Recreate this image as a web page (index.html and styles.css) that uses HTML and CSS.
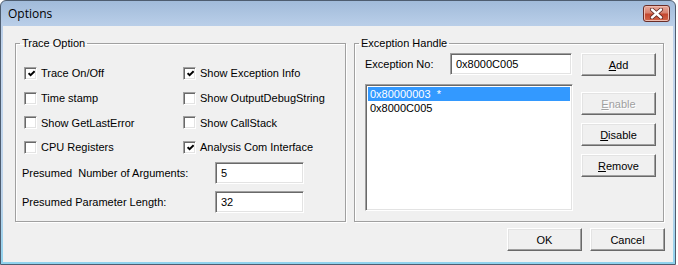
FILE: index.html
```html
<!DOCTYPE html>
<html lang="en">
  <head>
    <meta charset="utf-8">
    <title>Options</title>
    <link rel="stylesheet" href="styles.css">
  </head>
  <body>
    <div class="window">
      <div class="titlebar">
        <span class="title">Options</span>
        <div class="close">
          <svg width="15" height="11" viewBox="0 0 15 11">
            <path d="M3 1.5 L12 9.5 M12 1.5 L3 9.5" stroke="#5a2420" stroke-width="4" stroke-linecap="round"/>
            <path d="M3 1.5 L12 9.5 M12 1.5 L3 9.5" stroke="#fff" stroke-width="2.4" stroke-linecap="round"/>
          </svg>
        </div>
      </div>
      <div class="client">
        <div class="groups">
          <fieldset class="group trace">
            <legend>Trace Option</legend>
            <div class="checks">
              <label class="check"><span class="cb on"><svg width="7" height="7" viewBox="0 0 7 7"><polyline points="0.6,3.2 2.6,5.2 6.6,1.2" fill="none" stroke="#000" stroke-width="1.9"/></svg></span>Trace On/Off</label>
              <label class="check"><span class="cb"></span>Time stamp</label>
              <label class="check"><span class="cb"></span>Show GetLastError</label>
              <label class="check"><span class="cb"></span>CPU Registers</label>
              <label class="check"><span class="cb on"><svg width="7" height="7" viewBox="0 0 7 7"><polyline points="0.6,3.2 2.6,5.2 6.6,1.2" fill="none" stroke="#000" stroke-width="1.9"/></svg></span>Show Exception Info</label>
              <label class="check"><span class="cb"></span>Show OutputDebugString</label>
              <label class="check"><span class="cb"></span>Show CallStack</label>
              <label class="check"><span class="cb on"><svg width="7" height="7" viewBox="0 0 7 7"><polyline points="0.6,3.2 2.6,5.2 6.6,1.2" fill="none" stroke="#000" stroke-width="1.9"/></svg></span>Analysis Com Interface</label>
            </div>
            <div class="fields">
              <div class="field"><span class="field-label">Presumed&nbsp; Number of Arguments:</span><div class="edit num">5</div></div>
              <div class="field"><span class="field-label">Presumed Parameter Length:</span><div class="edit num">32</div></div>
            </div>
          </fieldset>
          <fieldset class="group exc">
            <legend>Exception Handle</legend>
            <div class="exc-body">
              <div class="exc-left">
                <div class="exc-no"><span class="exc-label">Exception No:</span><div class="edit hex">0x8000C005</div></div>
                <div class="listbox">
                  <div class="item selected">0x80000003&nbsp; *</div>
                  <div class="item">0x8000C005</div>
                </div>
              </div>
              <div class="exc-buttons">
                <button class="btn"><u>A</u>dd</button>
                <button class="btn disabled"><u>E</u>nable</button>
                <button class="btn"><u>D</u>isable</button>
                <button class="btn"><u>R</u>emove</button>
              </div>
            </div>
          </fieldset>
        </div>
        <div class="footer">
          <button class="btn">OK</button>
          <button class="btn">Cancel</button>
        </div>
      </div>
    </div>
  </body>
</html>
```

FILE: styles.css
```css
html { box-sizing : border-box }
*, *:before, *:after { box-sizing : inherit }

:root {
  --c-face : #f0f0f0;
  --c-light : #e3e3e3;
  --c-shadow : #a0a0a0;
  --c-dark : #696969;
  --c-select : #3399ff;

  --f-ui : "Liberation Sans", Arial, sans-serif;
  --f-title : "Open Sans", "Noto Sans", sans-serif;
}

body {
  margin : 0;
  background-color : #fff;
  font-family : var(--f-ui);
  font-size : 11px;
  color : #000;
}

.window {
  width : 676px;
  height : 265px;
  display : flex;
  flex-direction : column;
  border : 1px solid #4e5d70;
  border-radius : 6px 6px 0 0;
  background : linear-gradient(to bottom, #a1bbda, #b9cee8 24px, #c3d6ed 60px, #bcd3ea 200px, #8fd3ee);
}

.titlebar {
  height : 25px;
  display : flex;
  padding-left : 7px;
}

.title {
  font-family : var(--f-title);
  font-size : 12px;
  line-height : 25px;
  color : #000;
}

.close {
  margin : 4px 5px 0 auto;
  width : 27px;
  height : 17px;
  display : flex;
  align-items : center;
  justify-content : center;
  border : 1px solid #6a2d27;
  border-radius : 3px;
  background : linear-gradient(to bottom, #e9a99b, #d88370 45%, #c4472f 55%, #d2664a);
  box-shadow : inset 0 0 0 1px #eebcb0;
}

.client {
  flex : 1;
  margin : 0 2px 2px 2px;
  padding : 11px 8px 0 12px;
  background-color : var(--c-face);
}

.groups {
  display : flex;
  gap : 8px;
}

.group {
  margin : 0;
  padding : 0;
  height : 185px;
  border : 1px solid var(--c-shadow);
  box-shadow : inset 1px 1px #fff, 1px 1px #fff;
}

.group legend {
  margin-left : 4px;
  padding : 0 2px;
  line-height : 13px;
}

.trace { width : 331px }
.exc { width : 310px }

.checks {
  margin-top : 11px;
  padding-left : 8px;
  display : grid;
  grid-template-columns : 159px auto;
  grid-template-rows : repeat(4, 24.7px);
  grid-auto-flow : column;
}

.check {
  display : flex;
  align-items : center;
  gap : 4px;
}

.cb {
  width : 13px;
  height : 13px;
  display : flex;
  align-items : center;
  justify-content : center;
  background-color : #fff;
  border : 1px solid;
  border-color : var(--c-shadow) #fff #fff var(--c-shadow);
  box-shadow : inset 1px 1px var(--c-dark), inset -1px -1px var(--c-light);
}

.cb svg { margin : 1px 0 0 1px }

.fields {
  margin-top : 2px;
  padding-left : 6px;
  display : flex;
  flex-direction : column;
  gap : 7px;
}

.field {
  display : flex;
  align-items : center;
}

.field-label { width : 193px }

.edit {
  height : 22px;
  display : flex;
  align-items : center;
  padding : 0 5px;
  background-color : #fff;
  border : 1px solid;
  border-color : var(--c-shadow) #fff #fff var(--c-shadow);
  box-shadow : inset 1px 1px var(--c-dark), inset -1px -1px var(--c-light);
}

.num { width : 89px }
.hex { width : 122px }

.exc-body {
  margin-top : 3px;
  padding-left : 10px;
  display : flex;
  gap : 8px;
}

.exc-left {
  width : 208px;
  display : flex;
  flex-direction : column;
}

.exc-no {
  display : flex;
  align-items : center;
}

.exc-label { width : 85px }

.listbox {
  margin-top : 9px;
  height : 127px;
  padding : 2px;
  background-color : #fff;
  border : 1px solid;
  border-color : var(--c-shadow) #fff #fff var(--c-shadow);
  box-shadow : inset 1px 1px var(--c-dark), inset -1px -1px var(--c-light);
}

.item {
  height : 14px;
  line-height : 14px;
  padding-left : 2px;
}

.item.selected {
  color : #fff;
  background-color : var(--c-select);
}

.exc-buttons {
  display : flex;
  flex-direction : column;
  gap : 8px;
}

.exc-buttons .disabled { margin-top : 8px }

.btn {
  width : 75px;
  height : 23px;
  padding : 0;
  font : inherit;
  color : #000;
  background-color : var(--c-face);
  border : 1px solid;
  border-color : #fff var(--c-dark) var(--c-dark) #fff;
  box-shadow : inset -1px -1px var(--c-shadow), inset 1px 1px var(--c-light);
}

.btn.disabled {
  color : var(--c-shadow);
  text-shadow : 1px 1px #fff;
}

.footer {
  margin-top : 6px;
  display : flex;
  justify-content : flex-end;
  gap : 8px;
}
```
